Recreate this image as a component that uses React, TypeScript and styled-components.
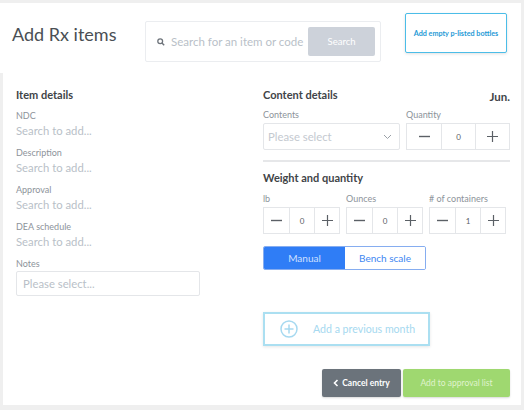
import React from "react";
import styled, { createGlobalStyle } from "styled-components";

const GlobalStyle = createGlobalStyle`
  html, body {
    margin: 0;
    padding: 0;
    background: #efefef;
    font-family: "Lato", "Liberation Sans", sans-serif;
  }
  * { box-sizing: border-box; }
`;

const colors = {
  text: "#3f4448",
  label: "#8d939a",
  placeholder: "#b9bfc8",
  border: "#e4e6e9",
  sky: "#4bbde8",
  skyText: "#1f9ad6",
  blue: "#2f7df6",
  green: "#9fd870",
  slate: "#6b737b",
};

const Page = styled.div`
  width: 524px;
  height: 410px;
  padding: 3px 3px 5px 0;
  display: flex;
  flex-direction: column;
`;

const Header = styled.header`
  flex: 0 0 70px;
  background: #fff;
  display: flex;
  align-items: flex-start;
  padding-left: 12px;
`;

const Title = styled.h1`
  margin: 20px 0 0;
  font-size: 18px;
  font-weight: 400;
  color: #4a4f54;
  width: 133px;
`;

const SearchBox = styled.div`
  margin-top: 18px;
  width: 236px;
  height: 41px;
  border: 1px solid #ebedf0;
  border-radius: 2px;
  display: flex;
  align-items: center;
  padding: 0 5px 0 11px;
`;

const SearchInput = styled.span`
  flex: 1;
  margin-left: 6px;
  font-size: 11.5px;
  color: ${colors.placeholder};
`;

const SearchButton = styled.button`
  width: 67px;
  height: 29px;
  border: none;
  border-radius: 2px;
  background: #cdd2da;
  color: #fff;
  font-family: inherit;
  font-size: 9.5px;
`;

const OutlineButton = styled.button`
  margin: 10px 0 0 24px;
  width: 102px;
  height: 40px;
  background: #fff;
  border: 1.5px solid ${colors.sky};
  border-radius: 2px;
  box-shadow: 0 1px 3px rgba(0, 0, 0, 0.12);
  color: ${colors.skyText};
  font-family: inherit;
  font-size: 7.2px;
  font-weight: 700;
  padding: 0;
`;

const Body = styled.main`
  flex: 1;
  min-height: 0;
  margin-left: 3px;
  background: #fff;
  display: grid;
  grid-template-columns: 1fr 247px;
  align-items: start;
  padding: 14px 11px 0 13px;
`;

const Column = styled.section`
  display: flex;
  flex-direction: column;
`;

const SectionTitle = styled.h2`
  margin: 0;
  height: 16px;
  line-height: 16px;
  font-size: 11px;
  font-weight: 700;
  color: ${colors.text};
  display: flex;
  justify-content: space-between;
`;

const Month = styled.span`
  font-size: 11.5px;
  font-weight: 700;
  margin-top: 2px;
`;

const Label = styled.div<{ $top?: number }>`
  margin-top: ${({ $top }) => $top ?? 8}px;
  height: 12px;
  line-height: 12px;
  font-size: 9px;
  color: ${colors.label};
`;

const Value = styled.div`
  margin-top: 1px;
  height: 16px;
  line-height: 16px;
  font-size: 11.3px;
  color: ${colors.placeholder};
`;

const NotesInput = styled.div`
  margin-top: 1px;
  width: 184px;
  height: 25px;
  border: 1px solid ${colors.border};
  border-radius: 2px;
  padding-left: 6px;
  line-height: 23px;
  font-size: 11.3px;
  color: ${colors.placeholder};
`;

const FieldRow = styled.div<{ $cols: string }>`
  display: grid;
  grid-template-columns: ${({ $cols }) => $cols};
  column-gap: 6px;
`;

const Field = styled.div`
  display: flex;
  flex-direction: column;
`;

const Select = styled.div`
  margin-top: 2px;
  height: 27px;
  border: 1px solid ${colors.border};
  border-radius: 2px;
  display: flex;
  align-items: center;
  justify-content: space-between;
  padding: 0 7px 0 4px;
  font-size: 11.3px;
  color: #c4c9d0;
`;

const Stepper = styled.div`
  margin-top: 2px;
  height: 27px;
  border: 1px solid ${colors.border};
  display: grid;
  grid-template-columns: 1fr 1fr 1fr;
`;

const StepCell = styled.div`
  display: flex;
  align-items: center;
  justify-content: center;
  color: #5b6066;
  font-size: 8px;
  & + & {
    border-left: 1px solid ${colors.border};
  }
`;

const Divider = styled.hr`
  margin: 10px 0 8px;
  border: none;
  height: 2px;
  background: #e6e7e9;
`;

const Toggle = styled.div`
  margin-top: 12px;
  width: 163px;
  height: 24px;
  border: 1px solid #86adf0;
  border-radius: 2px;
  display: grid;
  grid-template-columns: 81px 1fr;
  overflow: hidden;
`;

const ToggleOption = styled.div<{ $active?: boolean }>`
  display: flex;
  align-items: center;
  justify-content: center;
  font-size: 10px;
  background: ${({ $active }) => ($active ? colors.blue : "#fff")};
  color: ${({ $active }) => ($active ? "#cfe0ff" : "#3d86f2")};
`;

const PrevMonthButton = styled.button`
  margin-top: 42px;
  width: 167px;
  height: 34px;
  background: #fff;
  border: 2px solid #abdff1;
  box-shadow: 0 1px 3px rgba(0, 0, 0, 0.1);
  display: flex;
  align-items: center;
  padding: 0 0 0 15px;
  gap: 15px;
  color: #a6d9f0;
  font-family: inherit;
  font-size: 10.6px;
`;

const Actions = styled.div`
  margin-top: 23px;
  display: flex;
  justify-content: flex-end;
  gap: 2px;
`;

const ActionButton = styled.button<{ $tone: "slate" | "green" }>`
  height: 28px;
  width: ${({ $tone }) => ($tone === "slate" ? "79px" : "107px")};
  border: none;
  border-radius: 2px;
  background: ${({ $tone }) => ($tone === "slate" ? colors.slate : colors.green)};
  color: ${({ $tone }) => ($tone === "slate" ? "#fff" : "#dff3cd")};
  font-family: inherit;
  font-size: 8.5px;
  font-weight: ${({ $tone }) => ($tone === "slate" ? 700 : 400)};
  box-shadow: 0 1px 2px rgba(0, 0, 0, 0.15);
  display: flex;
  align-items: center;
  justify-content: center;
  gap: 3px;
`;

const Minus = () => (
  <svg width="11" height="11" viewBox="0 0 11 11">
    <path d="M0 5.5h11" stroke="#5b6066" strokeWidth="1.4" />
  </svg>
);

const Plus = () => (
  <svg width="11" height="11" viewBox="0 0 11 11">
    <path d="M0 5.5h11M5.5 0v11" stroke="#5b6066" strokeWidth="1.2" />
  </svg>
);

const QtyStepper = ({ value }: { value: number }) => (
  <Stepper>
    <StepCell>
      <Minus />
    </StepCell>
    <StepCell>{value}</StepCell>
    <StepCell>
      <Plus />
    </StepCell>
  </Stepper>
);

const details = ["NDC", "Description", "Approval", "DEA schedule"];

export default function App() {
  return (
    <Page>
      <GlobalStyle />
      <Header>
        <Title>Add Rx items</Title>
        <SearchBox>
          <svg width="8" height="8" viewBox="0 0 10 10">
            <circle cx="4" cy="4" r="3" fill="none" stroke="#6d737a" strokeWidth="1.6" />
            <path d="M6.2 6.2L9 9" stroke="#6d737a" strokeWidth="1.8" />
          </svg>
          <SearchInput>Search for an item or code</SearchInput>
          <SearchButton>Search</SearchButton>
        </SearchBox>
        <OutlineButton>Add empty p-listed bottles</OutlineButton>
      </Header>

      <Body>
        <Column>
          <SectionTitle>Item details</SectionTitle>
          {details.map((d, i) => (
            <React.Fragment key={d}>
              <Label $top={i === 0 ? 7 : 8}>{d}</Label>
              <Value>Search to add...</Value>
            </React.Fragment>
          ))}
          <Label $top={8}>Notes</Label>
          <NotesInput>Please select...</NotesInput>
        </Column>

        <Column>
          <SectionTitle>
            Content details
            <Month>Jun.</Month>
          </SectionTitle>
          <FieldRow $cols="137px 1fr">
            <Field>
              <Label $top={6}>Contents</Label>
              <Select>
                Please select
                <svg width="9" height="6" viewBox="0 0 9 6">
                  <path d="M1 1l3.5 3.5L8 1" fill="none" stroke="#9aa0a7" strokeWidth="1" />
                </svg>
              </Select>
            </Field>
            <Field>
              <Label $top={6}>Quantity</Label>
              <QtyStepper value={0} />
            </Field>
          </FieldRow>

          <Divider />

          <SectionTitle>Weight and quantity</SectionTitle>
          <FieldRow $cols="77px 77px 77px">
            <Field>
              <Label $top={7}>lb</Label>
              <QtyStepper value={0} />
            </Field>
            <Field>
              <Label $top={7}>Ounces</Label>
              <QtyStepper value={0} />
            </Field>
            <Field>
              <Label $top={7}># of containers</Label>
              <QtyStepper value={1} />
            </Field>
          </FieldRow>

          <Toggle>
            <ToggleOption $active>Manual</ToggleOption>
            <ToggleOption>Bench scale</ToggleOption>
          </Toggle>

          <PrevMonthButton>
            <svg width="18" height="18" viewBox="0 0 18 18">
              <circle cx="9" cy="9" r="8" fill="none" stroke="#a6d9f0" strokeWidth="1.5" />
              <path d="M9 4.5v9M4.5 9h9" stroke="#a6d9f0" strokeWidth="1.5" />
            </svg>
            Add a previous month
          </PrevMonthButton>

          <Actions>
            <ActionButton $tone="slate">
              <svg width="6" height="8" viewBox="0 0 6 8">
                <path d="M4.5 1L1.5 4l3 3" fill="none" stroke="#fff" strokeWidth="1.6" />
              </svg>
              Cancel entry
            </ActionButton>
            <ActionButton $tone="green">Add to approval list</ActionButton>
          </Actions>
        </Column>
      </Body>
    </Page>
  );
}
